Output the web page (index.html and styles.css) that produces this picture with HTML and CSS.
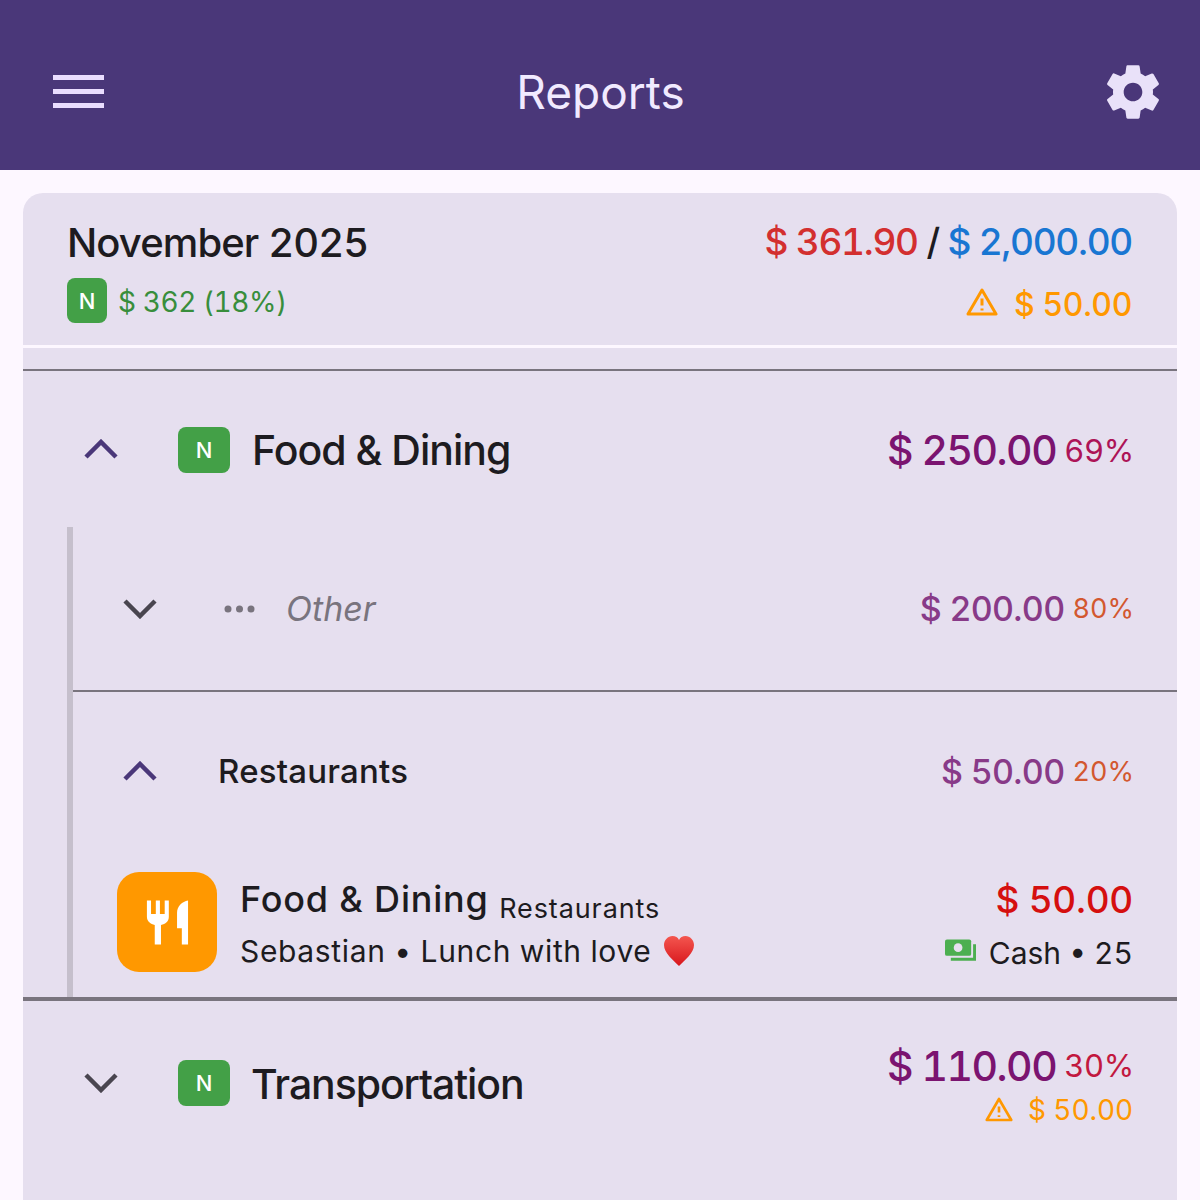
FILE: index.html
```html
<!DOCTYPE html>
<html lang="en">

<head>
    <meta charset="UTF-8">
    <meta name="viewport" content="width=device-width, initial-scale=1.0">
    <title>Reports</title>
    <link rel="stylesheet" href="styles.css">
</head>

<body>
    <header class="topbar">
        <svg class="menu-icon" viewBox="0 0 51 34"><path d="M0 2.500h51M0 16.500h51M0 30.500h51" /></svg>
        <h1 class="topbar-title">Reports</h1>
        <svg class="gear-icon" viewBox="0 0 24 24"><path fill-rule="evenodd" d="M19.430 12.980c.04-.32.07-.64.07-.98s-.03-.66-.07-.98l2.110-1.650c.19-.15.24-.42.12-.64l-2-3.460c-.12-.22-.39-.3-.61-.22l-2.490 1c-.52-.4-1.080-.73-1.690-.98l-.38-2.650A.488.488 0 0 0 14 2h-4c-.25 0-.46.18-.49.420l-.38 2.650c-.61.25-1.170.59-1.690.98l-2.490-1c-.23-.09-.49 0-.61.220l-2 3.460c-.13.22-.07.49.12.64l2.110 1.650c-.04.32-.07.65-.07.98s.03.66.07.98l-2.110 1.650c-.19.15-.24.42-.12.64l2 3.460c.12.22.39.3.61.22l2.490-1c.52.4 1.080.73 1.690.98l.38 2.650c.03.24.24.42.49.42h4c.25 0 .46-.18.49-.42l.38-2.650c.61-.25 1.170-.59 1.690-.98l2.490 1c.23.09.49 0 .61-.22l2-3.460c.12-.22.07-.49-.12-.64l-2.110-1.650zM12 15.500c-1.930 0-3.500-1.570-3.500-3.500s1.570-3.500 3.500-3.500 3.500 1.570 3.500 3.500-1.570 3.500-3.500 3.500z" /></svg>
    </header>

    <main class="card">
        <section class="summary">
            <div class="summary-left">
                <div class="summary-month">November 2025</div>
                <div class="summary-need">
                    <span class="badge badge-small">N</span>
                    <span class="need-text">$ 362 (18%)</span>
                </div>
            </div>
            <div class="summary-right">
                <div class="summary-total">
                    <span class="red">$ 361.90</span> <span class="slash">/</span> <span class="blue">$ 2,000.00</span>
                </div>
                <div class="warn summary-warn">
                    <svg class="warn-icon" viewBox="0 0 32 28"><path d="M16 2 L30 26 H2 Z" /><path d="M16 10.500v7M16 20.500v2" /></svg>
                    <span>$ 50.00</span>
                </div>
            </div>
        </section>
        <div class="summary-gap"></div>

        <section class="cat-row food-row">
            <svg class="chevron chevron-up" viewBox="0 0 34 20"><path d="M2 18 L17 3 L32 18" /></svg>
            <span class="badge">N</span>
            <span class="cat-name">Food &amp; Dining</span>
            <span class="cat-amount"><span class="plum">$ 250.00</span> <span class="pct pct-pink">69%</span></span>
        </section>

        <div class="sublist">
            <div class="sub-row sub-other">
                <svg class="chevron chevron-down" viewBox="0 0 34 20"><path d="M2 2 L17 17 L32 2" /></svg>
                <svg class="dots" viewBox="0 0 32 8"><circle cx="4" cy="4" r="3.500" /><circle cx="15.500" cy="4" r="3.500" /><circle cx="27" cy="4" r="3.500" /></svg>
                <span class="other-name">Other</span>
                <span class="sub-amount"><span class="plum-light">$ 200.00</span> <span class="pct-small">80%</span></span>
            </div>
            <div class="sub-row sub-rest">
                <svg class="chevron chevron-up" viewBox="0 0 34 20"><path d="M2 18 L17 3 L32 18" /></svg>
                <span class="rest-name">Restaurants</span>
                <span class="sub-amount"><span class="plum-light">$ 50.00</span> <span class="pct-small">20%</span></span>
            </div>
            <div class="tx-row">
                <div class="tx-icon">
                    <svg viewBox="0 0 46 48"><path d="M2 1h4.300v14h5V1h4.300v14h5V1h4.300v17c0 5-3.500 7.500-8.200 8.500V47H10.200V26.500C6 25.500 2 23 2 18z" /><path d="M45 1v46h-6.500V30H33.500V14C33.500 7 39 2 45 1z" /></svg>
                </div>
                <div class="tx-text">
                    <div class="tx-title">Food &amp; Dining <span class="tx-sub">Restaurants</span></div>
                    <div class="tx-note">Sebastian • Lunch with love
                        <svg class="heart" viewBox="0 0 32 32">
                            <defs>
                                <linearGradient id="heart-fill" x1="0" y1="0" x2="0" y2="1">
                                    <stop offset="0" stop-color="#f4564f" />
                                    <stop offset="1" stop-color="#d8161c" />
                                </linearGradient>
                            </defs>
                            <path fill="url(#heart-fill)" d="M16 31C10 25 1 18 1 10 1 5 5 1 9.500 1 12.500 1 15 2.500 16 5 17 2.500 19.500 1 22.500 1 27 1 31 5 31 10 31 18 22 25 16 31z" />
                        </svg>
                    </div>
                </div>
                <div class="tx-right">
                    <div class="tx-amount">$ 50.00</div>
                    <div class="tx-meta">
                        <svg class="cash-icon" viewBox="0 0 32 25"><path class="cash-back" d="M30.500 5v15.500H6" /><rect class="cash-note" x="0" y="0" width="27" height="17" rx="2" /><circle class="cash-dot" cx="13.500" cy="8.500" r="4.500" /></svg>
                        <span>Cash • 25</span>
                    </div>
                </div>
            </div>
        </div>

        <section class="cat-row trans-row">
            <svg class="chevron chevron-down" viewBox="0 0 34 20"><path d="M2 2 L17 17 L32 2" /></svg>
            <span class="badge">N</span>
            <span class="cat-name">Transportation</span>
            <div class="trans-right">
                <span class="cat-amount"><span class="plum">$ 110.00</span> <span class="pct pct-red">30%</span></span>
                <div class="warn trans-warn">
                    <svg class="warn-icon" viewBox="0 0 32 28"><path d="M16 2 L30 26 H2 Z" /><path d="M16 10.500v7M16 20.500v2" /></svg>
                    <span>$ 50.00</span>
                </div>
            </div>
        </section>
    </main>
</body>

</html>
```

FILE: styles.css
```css
* {
    box-sizing: border-box;
}

body {
    margin: 0;
    height: 1200px;
    overflow: hidden;
    background-color: #fdf7ff;
    color: #1d1b20;
    font-family: "Inter", "Noto Sans", sans-serif;
    font-variant-numeric: tabular-nums;
}

/* 顶栏 */
.topbar {
    display: flex;
    align-items: center;
    justify-content: space-between;
    height: 170px;
    padding: 28px 35px 14px 53px;
    background-color: #4a3779;
}

.menu-icon {
    width: 51px;
    height: 34px;
    fill: none;
    stroke: #eaddff;
    stroke-width: 5;
}

.topbar-title {
    margin: 0 4px 0 0;
    color: #f1eaff;
    font-size: 46px;
    font-weight: 400;
}

.gear-icon {
    width: 64px;
    height: 64px;
    fill: #e9e1f9;
}

/* 卡片 */
.card {
    margin: 23px 23px 0;
    height: 1007px;
    overflow: hidden;
    border-radius: 20px 20px 0 0;
    background-color: #e6dfef;
}

.summary {
    display: flex;
    justify-content: space-between;
    height: 155px;
    padding: 25px 44px 0 44px;
    border-bottom: 3px solid #fdf7ff;
}

.summary-month {
    font-size: 40px;
    font-weight: 500;
    letter-spacing: -0.9px;
    line-height: 50px;
}

.summary-need {
    display: flex;
    align-items: center;
    gap: 11px;
    margin: 10px 0 0 0;
    color: #388e3c;
    font-size: 28px;
    letter-spacing: -0.4px;
}

.need-text {
    margin-top: 2px;
}

.summary-right {
    margin-right: 1px;
    text-align: right;
}

.summary-total {
    font-size: 37px;
    font-weight: 500;
    line-height: 48px;
    letter-spacing: -1.3px;
}

.red { color: #d32f2f; }
.blue { color: #1976d2; }
.slash { color: #1d1b20; }

.warn {
    display: flex;
    align-items: center;
    justify-content: flex-end;
    color: #ff9800;
}

.warn-icon {
    fill: none;
    stroke: #ff9800;
    stroke-width: 3;
    stroke-linejoin: round;
}

.summary-warn {
    gap: 16px;
    margin-top: 19px;
    font-size: 32px;
    font-weight: 500;
    letter-spacing: -0.4px;
}

.summary-warn .warn-icon {
    width: 32px;
    height: 28px;
    margin-top: -5px;
}

.summary-gap {
    height: 23px;
    border-bottom: 2px solid #79747e;
}

/* 分类行 */
.badge {
    display: flex;
    align-items: center;
    justify-content: center;
    flex: none;
    width: 52px;
    height: 46px;
    border-radius: 8px;
    background-color: #43a047;
    color: #fff;
    font-size: 22px;
    font-weight: 500;
    letter-spacing: 0;
}

.badge-small {
    width: 40px;
    height: 45px;
}

.chevron {
    flex: none;
    width: 34px;
    height: 20px;
    fill: none;
    stroke-width: 4.500;
}

.chevron-up { stroke: #4a3779; }
.chevron-down { stroke: #49454f; }

.cat-row {
    display: flex;
    align-items: center;
    padding: 0 43px 0 61px;
}

.cat-row .badge {
    margin-left: 60px;
}

.food-row {
    height: 156px;
    padding-top: 2px;
}

.food-row .chevron {
    margin-top: -2px;
}

.cat-name {
    flex: 1;
    margin-left: 22px;
    font-size: 41px;
    font-weight: 500;
    letter-spacing: -1px;
}

.cat-amount {
    display: flex;
    align-items: center;
    justify-content: flex-end;
    gap: 8px;
}

.plum {
    color: #7b1470;
    font-size: 41px;
    font-weight: 500;
    letter-spacing: -1.5px;
}

.pct {
    font-size: 31px;
    letter-spacing: -0.3px;
}

.pct-pink { color: #ad1457; }
.pct-red { color: #c2183f; }

/* 子分类 */
.sublist {
    margin-left: 44px;
    height: 470px;
    border-left: 6px solid #c5bfcc;
}

.sub-row {
    display: flex;
    align-items: center;
    padding-right: 43px;
}

.sub-other {
    height: 165px;
    border-bottom: 2px solid #79747e;
}

.sub-other .chevron {
    margin-left: 50px;
}

.dots {
    flex: none;
    width: 32px;
    height: 8px;
    margin-left: 67px;
    fill: #79747e;
}

.other-name {
    flex: 1;
    margin-left: 30px;
    color: #79747e;
    font-size: 34px;
    font-style: italic;
}

.sub-rest {
    height: 158px;
}

.sub-rest .chevron {
    margin-left: 50px;
}

.rest-name {
    flex: 1;
    margin-left: 61px;
    font-size: 33px;
    font-weight: 500;
    letter-spacing: 0.2px;
}

.sub-amount {
    display: flex;
    align-items: center;
    gap: 8px;
}

.plum-light {
    color: #883a88;
    font-size: 34px;
    font-weight: 500;
    letter-spacing: -0.7px;
}

.pct-small {
    color: #d3582f;
    font-size: 27px;
}

/* 交易 */
.tx-row {
    display: flex;
    align-items: flex-start;
    padding: 22px 44px 0 44px;
}

.tx-icon {
    display: flex;
    align-items: center;
    justify-content: center;
    flex: none;
    width: 100px;
    height: 100px;
    border-radius: 22px;
    background-color: #ff9800;
}

.tx-icon svg {
    width: 44px;
    height: 47px;
    fill: #fff;
}

.tx-text {
    flex: 1;
    margin-left: 23px;
    padding-top: 2px;
}

.tx-title {
    font-size: 36px;
    font-weight: 500;
    line-height: 50px;
    letter-spacing: 0.8px;
    white-space: nowrap;
}

.tx-sub {
    font-size: 27px;
    font-weight: 400;
    line-height: 1;
    letter-spacing: 0.9px;
    vertical-align: -6px;
}

.tx-note {
    display: flex;
    align-items: center;
    gap: 11px;
    margin-top: 4px;
    font-size: 30px;
    line-height: 46px;
    letter-spacing: 0.65px;
    white-space: nowrap;
}

.heart {
    width: 32px;
    height: 32px;
}

.tx-right {
    padding-top: 3px;
    text-align: right;
}

.tx-amount {
    color: #d50f0f;
    font-size: 37px;
    font-weight: 500;
    line-height: 50px;
    letter-spacing: -0.3px;
}

.tx-meta {
    display: flex;
    align-items: center;
    justify-content: flex-end;
    gap: 13px;
    margin-top: 5px;
    font-size: 30px;
    line-height: 46px;
}

.cash-icon {
    width: 31px;
    height: 25px;
    margin-top: -4px;
}

.cash-back {
    fill: none;
    stroke: #4caf50;
    stroke-width: 3;
}

.cash-note { fill: #4caf50; }
.cash-dot { fill: #e6dfef; }

.trans-row {
    height: 168px;
    padding-top: 1px;
    border-top: 4px solid #79747e;
}

.trans-row .chevron,
.trans-row .badge {
    margin-top: -1px;
}

.trans-row .cat-name {
    margin-left: 21px;
    letter-spacing: -1.1px;
}

.trans-warn {
    gap: 15px;
    margin: 2px 1px 0 0;
    font-size: 28px;
    letter-spacing: -0.1px;
}

.trans-warn .warn-icon {
    width: 28px;
    height: 25px;
}
```
